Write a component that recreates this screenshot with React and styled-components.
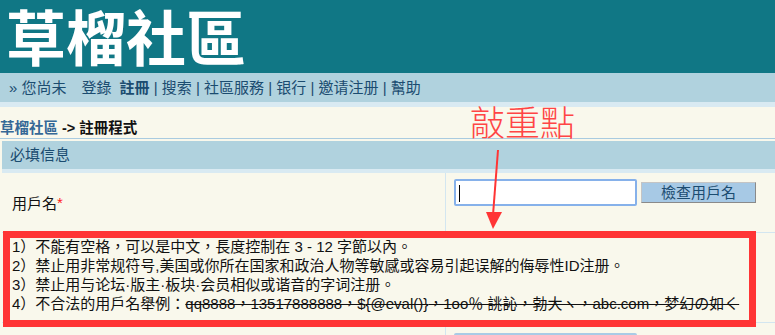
import styled, { createGlobalStyle } from "styled-components";

const GlobalStyle = createGlobalStyle`
  body {
    margin: 0;
    background: #f9f8ec;
    font-family: "Liberation Sans", "Noto Sans CJK TC", sans-serif;
    font-size: 15px;
    color: #111;
  }
`;

const Page = styled.div`
  position: relative;
  width: 775px;
  height: 335px;
  overflow: hidden;
`;

const Header = styled.div`
  height: 73px;
  background: #107785;
  padding-left: 6px;
`;

const Title = styled.div`
  font-family: "Noto Sans CJK TC", sans-serif;
  font-size: 60px;
  font-weight: 700;
  line-height: 70px;
  color: #fff;
`;

const Nav = styled.div`
  height: 29px;
  line-height: 29px;
  background: #b0d2de;
  border-bottom: 5px solid #d9eaf2;
  padding-left: 9px;
  color: #1b4c70;
  white-space: nowrap;
`;

const NavItem = styled.span`
  font-weight: ${(p) => (p.$bold ? 700 : 400)};
  margin-left: ${(p) => p.$gap || 0}px;
`;

const Crumb = styled.div`
  padding: 12px 0 1px;
  line-height: 18px;
  font-size: 14.5px;
  font-weight: 700;
  border-bottom: 1px solid #a9cbe0;
`;

const CrumbLink = styled.span`
  color: #356896;
`;

const Form = styled.div`
  margin: 2px 0 0 2px;
  display: grid;
  grid-template-columns: 444px 1fr;
`;

const SectionHead = styled.div`
  grid-column: 1 / -1;
  height: 28px;
  line-height: 28px;
  background: #b0d2de;
  border-bottom: 4px solid #d9eaf2;
  padding-left: 8px;
  color: #1b4c70;
`;

const Label = styled.div`
  height: ${(p) => p.$h}px;
  display: flex;
  align-items: ${(p) => (p.$top ? "flex-start" : "center")};
  padding: ${(p) => (p.$top ? "11px 0 0 10px" : "0 0 0 10px")};
  border-right: 1px solid #d3e6f0;
  border-bottom: 1px solid #d3e6f0;
  box-sizing: border-box;
`;

const Star = styled.span`
  color: #ff1a1a;
`;

const Field = styled.div`
  height: ${(p) => p.$h}px;
  box-sizing: border-box;
  padding: ${(p) => p.$pt}px 0 0 8px;
  border-bottom: 1px solid #d3e6f0;
  display: flex;
  align-items: flex-start;
  gap: 4px;
`;

const InputBox = styled.div`
  width: 183px;
  height: 27px;
  box-sizing: border-box;
  background: #fff;
  border: 2px solid ${(p) => (p.$focus ? "#86b1ea" : "#a9cbe6")};
  border-radius: 2px;
  padding: 4px 0 0 3px;
`;

const Caret = styled.span`
  display: block;
  width: 1px;
  height: 17px;
  background: #000;
`;

const CheckButton = styled.div`
  margin-top: 3px;
  width: 115px;
  height: 21px;
  box-sizing: border-box;
  background: #a7c9e5;
  border: 1px solid;
  border-color: #c4c4c4 #8a8a8a #8a8a8a #c4c4c4;
  color: #1b4c70;
  text-align: center;
  line-height: 19px;
  font-size: 15px;
`;

const Hint = styled.div`
  grid-column: 1 / -1;
  height: 90px;
  box-sizing: border-box;
  padding: 4px 0 0 10px;
  line-height: 19px;
  border-bottom: 1px solid #d3e6f0;
  white-space: nowrap;
`;

const Struck = styled.span`
  text-decoration: line-through;
`;

const Note = styled.div`
  position: absolute;
  left: 470px;
  top: 102px;
  font-family: "Noto Sans CJK TC", serif;
  font-weight: 300;
  font-size: 35px;
  line-height: 38px;
  color: #ff4545;
`;

const Arrow = styled.svg`
  position: absolute;
  left: 480px;
  top: 145px;
`;

const RedBox = styled.div`
  position: absolute;
  left: 3px;
  top: 231px;
  width: 753px;
  height: 96px;
  box-sizing: border-box;
  border: 7px solid #ff3535;
`;

export default function App() {
  return (
    <Page>
      <GlobalStyle />
      <Header>
        <Title>草榴社區</Title>
      </Header>
      <Nav>
        <NavItem>» 您尚未</NavItem>
        <NavItem $gap={15}>登錄</NavItem>
        <NavItem $gap={8} $bold>註冊</NavItem>
        <NavItem> | 搜索 | 社區服務 | 银行 | 邀请注册 | 幫助</NavItem>
      </Nav>
      <Crumb>
        <CrumbLink>草榴社區</CrumbLink> -&gt; 註冊程式
      </Crumb>
      <Form>
        <SectionHead>必填信息</SectionHead>

        <Label $h={60}>
          用戶名<Star>*</Star>
        </Label>
        <Field $h={60} $pt={6}>
          <InputBox $focus>
            <Caret />
          </InputBox>
          <CheckButton>檢查用戶名</CheckButton>
        </Field>

        <Hint>
          1）不能有空格，可以是中文，長度控制在 3 - 12 字節以內。
          <br />
          2）禁止用非常规符号,美国或你所在国家和政治人物等敏感或容易引起误解的侮辱性ID注册。
          <br />
          3）禁止用与论坛·版主·板块·会员相似或谐音的字词注册。
          <br />
          4）不合法的用戶名舉例：
          <Struck>qq8888，13517888888，${"{@eval()}"}，1oo％ 誂訫，勃大ヽ，abc.com，梦幻の如く</Struck>
        </Hint>

        <Label $h={40} $top>
          密碼<Star>*</Star>
        </Label>
        <Field $h={40} $pt={10}>
          <InputBox />
        </Field>
      </Form>

      <Note>敲重點</Note>
      <Arrow width="30" height="90" viewBox="0 0 30 90">
        <line x1="18" y1="5" x2="13" y2="70" stroke="#ff3535" strokeWidth="2" />
        <polygon points="6,67 22,67 13,84" fill="#ff3535" />
      </Arrow>
      <RedBox />
    </Page>
  );
}
